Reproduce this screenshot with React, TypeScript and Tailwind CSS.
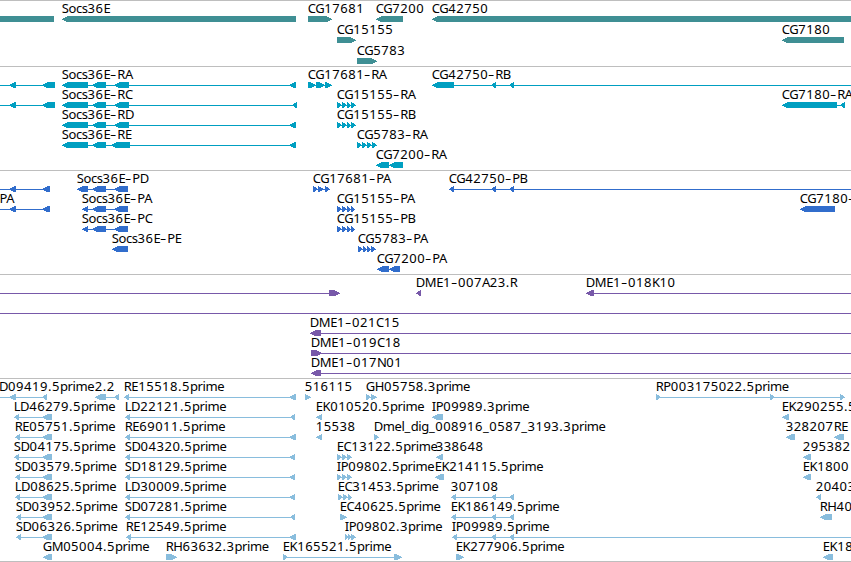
type Seg = [number, number];

interface Feature {
  label?: string;
  x?: number;
  dir?: 'l' | 'r' | 'n';
  segs: Seg[];
  line?: Seg;
}

interface TrackData {
  name: string;
  color: string;
  rowClass: string;
  endClass: string;
  rows: Feature[][];
}

const END = 860;

const left = (label: string, segs: Seg[], line?: Seg): Feature => ({ label, dir: 'l', segs, line });
const right = (label: string, segs: Seg[], line?: Seg): Feature => ({ label, dir: 'r', segs, line });
const upstream = (end: number): Feature => ({ dir: 'l', segs: [[9, 16], [42, end]], line: [-5, end] });

const rnaExons: Seg[] = [[62, 88], [92, 106], [114, 129], [289, 296]];
const cdsExons: Seg[] = [[82, 88], [92, 106], [114, 128]];
const cg15155: Seg[] = [[337, 342], [342, 347], [347, 351], [351, 356]];
const cg15155p: Seg[] = [[337, 342], [342, 347], [347, 351], [351, 355]];
const est = (start: number): Seg[] => [[start, start + 5], [42, 52]];
const longEst = (start: number, last: number, end: number): Seg[] => [[start, start + 5], [last, end]];
const triple = (a: number): Seg[] => [[a, a + 5], [a + 5, a + 10], [a + 10, 352]];

const tracks: TrackData[] = [
  {
    name: 'gene',
    color: '#3f8f94',
    rowClass: 'h-[21px]',
    endClass: 'h-[2px]',
    rows: [
      [
        { dir: 'n', segs: [[-5, 54]] },
        left('Socs36E', [[62, 296]]),
        right('CG17681', [[308, 332]]),
        left('CG7200', [[376, 403]]),
        left('CG42750', [[432, END]]),
      ],
      [right('CG15155', [[337, 356]]), left('CG7180', [[782, 844]])],
      [right('CG5783', [[357, 377]])],
    ],
  },
  {
    name: 'mrna',
    color: '#009fc1',
    rowClass: 'h-5',
    endClass: 'h-[3px]',
    rows: [
      [
        upstream(55),
        left('Socs36E-RA', rnaExons),
        right('CG17681-RA', [[308, 316], [316, 325], [325, 332]]),
        left('CG42750-RB', [[432, 454], [491, 496], [509, 514]], [432, END]),
      ],
      [
        upstream(55),
        left('Socs36E-RC', [[62, 88], [92, 106], [114, 129], [292, 297]]),
        right('CG15155-RA', cg15155),
        left('CG7180-RA', [[782, 837], [840, 845]]),
      ],
      [left('Socs36E-RD', rnaExons), right('CG15155-RB', cg15155)],
      [
        left('Socs36E-RE', [[62, 88], [92, 106], [111, 130], [289, 296]]),
        right('CG5783-RA', [[357, 362], [362, 367], [367, 372], [372, 377]]),
      ],
      [left('CG7200-RA', [[376, 389], [389, 403]])],
    ],
  },
  {
    name: 'cds',
    color: '#316dcc',
    rowClass: 'h-5',
    endClass: 'h-[3px]',
    rows: [
      [
        upstream(50),
        left('Socs36E-PD', [[77, 88], [92, 106], [114, 128]]),
        right('CG17681-PA', [[313, 318], [318, 324], [325, 330]]),
        left('CG42750-PB', [[449, 454], [491, 496], [509, 514]], [449, END]),
      ],
      [
        { ...upstream(50), label: 'PA', x: -0.5 },
        left('Socs36E-PA', cdsExons),
        right('CG15155-PA', cg15155p),
        left('CG7180-', [[800, 835]]),
      ],
      [left('Socs36E-PC', cdsExons), right('CG15155-PB', cg15155p)],
      [
        left('Socs36E-PE', [[112, 128]]),
        right('CG5783-PA', [[358, 363], [363, 367], [367, 371], [371, 376]]),
      ],
      [left('CG7200-PA', [[377, 389], [389, 400]])],
    ],
  },
  {
    name: 'clone',
    color: '#7859a9',
    rowClass: 'h-5',
    endClass: 'h-[3px]',
    rows: [
      [
        { dir: 'r', segs: [[329, 340]], line: [-5, 330] },
        left('DME1-007A23.R', [[416, 421]]),
        left('DME1-018K10', [[586, 594]], [586, END]),
      ],
      [{ segs: [], line: [-5, END] }],
      [left('DME1-021C15', [[310, 321]], [310, END])],
      [right('DME1-019C18', [[311, 322]], [311, END])],
      [left('DME1-017N01', [[311, 321]], [311, END])],
    ],
  },
  {
    name: 'est',
    color: '#89bddd',
    rowClass: 'h-5',
    endClass: 'h-[2px]',
    rows: [
      [
        { label: 'D09419.5prime', x: -1, dir: 'l', segs: [[9, 16], [42, 47]], line: [-5, 47] },
        left('2.2', [[95, 106], [114, 119]]),
        left('RE15518.5prime', longEst(124, 289, 296)),
        right('516115', [[305, 311]]),
        right('GH05758.3prime', [[366, 371], [371, 377]]),
        right('RP003175022.5prime', [[656, 661], [770, 775], [840, 845]]),
      ],
      [
        left('LD46279.5prime', est(14)),
        left('LD22121.5prime', longEst(125, 290, 295)),
        left('EK010520.5prime', [[316, 322]]),
        left('IP09989.3prime', [[432, 443]]),
        left('EK290255.5', [[782, 789]]),
      ],
      [
        left('RE05751.5prime', est(15)),
        left('RE69011.5prime', longEst(125, 289, 296)),
        left('15538', [[316, 322]]),
        right('Dmel_dig_008916_0587_3193.3prime', [[374, 379]]),
        left('328207', [[786, 795]]),
        left('RE', [[834, 844]]),
      ],
      [
        left('SD04175.5prime', est(14)),
        left('SD04320.5prime', longEst(125, 289, 295)),
        right('EC13122.5prime', triple(337)),
        left('338648', [[436, 443]]),
        left('295382', [[803, 811]]),
      ],
      [
        left('SD03579.5prime', est(15)),
        left('SD18129.5prime', longEst(125, 289, 295)),
        right('IP09802.5prime', triple(337)),
        left('EK214115.5prime', [[435, 444]]),
        left('EK1800', [[803, 811]]),
      ],
      [
        left('LD08625.5prime', est(15)),
        left('LD30009.5prime', longEst(125, 289, 295)),
        right('EC31453.5prime', triple(338)),
        left('307108', [[451, 456], [491, 496], [509, 514]]),
        left('20403', [[816, 821]]),
      ],
      [
        left('SD03952.5prime', est(16)),
        left('SD07281.5prime', longEst(125, 290, 295)),
        right('EC40625.5prime', [[340, 347]]),
        left('EK186149.5prime', [[451, 456], [491, 496], [509, 514]]),
        left('RH40', [[820, 832]]),
      ],
      [
        left('SD06326.5prime', est(16)),
        left('RE12549.5prime', longEst(126, 289, 296)),
        right('IP09802.3prime', [[345, 348], [348, 351], [351, 356]]),
        left('IP09989.5prime', [[452, 457], [491, 496], [509, 514]], [452, END]),
      ],
      [
        left('GM05004.5prime', [[43, 52]]),
        right('RH63632.3prime', [[166, 177]]),
        right('EK165521.5prime', [[283, 288], [394, 402]]),
        right('EK277906.5prime', [[456, 464]]),
        left('EK18', [[823, 833]]),
      ],
    ],
  },
];

// How far each of the six pixel rows of an arrow is set back from its tip.
const STEPS = [5, 3, 1, 0, 2, 4];

function exonPath([a, b]: Seg, dir: Feature['dir']) {
  const k = Math.min(5, b - a - 1) / 5;
  return STEPS.map((s, y) => {
    const inset = dir === 'n' ? 0 : Math.round(s * k);
    const x0 = dir === 'l' ? a + inset : a;
    const x1 = dir === 'r' ? b - inset : b;
    return `M${x0} ${y}H${x1}V${y + 1}H${x0}Z`;
  }).join('');
}

function featurePath(f: Feature) {
  const line = f.line ?? (f.segs.length > 1 ? [f.segs[0][0], f.segs[f.segs.length - 1][1]] : null);
  return f.segs.map((s) => exonPath(s, f.dir)).join('') + (line ? `M${line[0]} 3H${line[1]}V4H${line[0]}Z` : '');
}

// Digits are set slightly loose, letters slightly tight, and hyphens wide.
function Label({ text }: { text: string }) {
  return text.split(/(-|[\d._]+)/).map((part, i) => {
    if (part === '-')
      return (
        <span key={i} className="inline-block w-[7px] origin-left scale-x-[1.5]">
          -
        </span>
      );
    return (
      <span key={i} className={/^[\d._]/.test(part) ? 'tracking-[0.53px]' : 'tracking-[-0.4px]'}>
        {part}
      </span>
    );
  });
}

function Row({ features, color, className }: { features: Feature[]; color: string; className: string }) {
  return (
    <div className={`relative pt-[15px] ${className}`}>
      {features.map((f, i) =>
        f.label ? (
          <span
            key={i}
            className="absolute top-0 whitespace-pre text-[13px] leading-[14px]"
            style={{ left: f.x ?? f.segs[0][0] - 0.3 }}
          >
            <Label text={f.label} />
          </span>
        ) : null,
      )}
      <svg className="block h-1.5 w-[851px]" viewBox="0 0 851 6" shapeRendering="crispEdges" fill={color}>
        {features.map((f, i) => (
          <path key={i} d={featurePath(f)} />
        ))}
      </svg>
    </div>
  );
}

export default function App() {
  return (
    <main className="flex h-[562px] w-[851px] flex-col overflow-hidden bg-white font-['Noto_Sans','DejaVu_Sans',sans-serif] text-black">
      {tracks.map((t) => (
        <section key={t.name} className="shrink-0 border-t border-[#bebebe]">
          {t.rows.map((features, i) => (
            <Row key={i} features={features} color={t.color} className={t.rowClass} />
          ))}
          <div className={t.endClass} />
        </section>
      ))}
      <div className="h-px shrink-0 bg-[#bebebe]" />
    </main>
  );
}
